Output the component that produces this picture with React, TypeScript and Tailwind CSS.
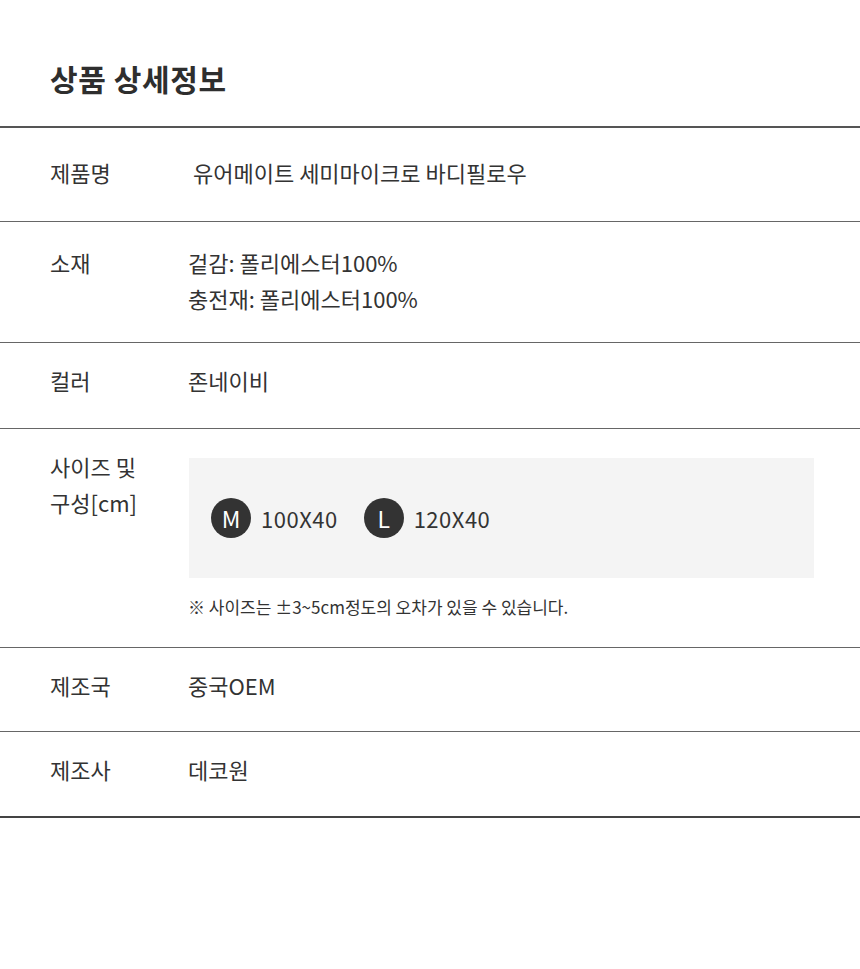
import React from "react";

const FONT = { fontFamily: '"Noto Sans CJK KR", "Noto Sans", sans-serif' };

interface RowProps {
  label: React.ReactNode;
  children: React.ReactNode;
  pad: string;
  last?: boolean;
}

const Row: React.FC<RowProps> = ({ label, children, pad, last }) => (
  <div className={`flex pl-[50px] ${last ? "" : "border-b border-[#666]"} ${pad}`}>
    <div className="w-[138px] shrink-0">{label}</div>
    <div className="flex-1 min-w-0">{children}</div>
  </div>
);

const SizeBadge: React.FC<{ letter: string; size: string }> = ({ letter, size }) => (
  <div className="flex items-center gap-[10px]">
    <span className="w-10 h-10 rounded-full bg-[#333] text-white flex items-center justify-center text-[23px] leading-none">
      {letter}
    </span>
    <span className="tracking-[0.5px]">{size}</span>
  </div>
);

export default function App() {
  return (
    <div className="min-h-screen bg-white text-[#333]" style={FONT}>
      {/* Header */}
      <h1 className="pt-[56px] pb-[25px] pl-[50px] text-[30px] leading-[45px] font-bold tracking-[0.6px] text-[#2e2e2e]">
        상품 상세정보
      </h1>

      <div className="border-t-2 border-b-2 border-t-[#555] border-b-[#444] text-[22px] leading-[36px]">
        <Row label="제품명" pad="pt-[26px] pb-[31px]">
          <span className="pl-[5px]">유어메이트 세미마이크로 바디필로우</span>
        </Row>
        <Row label="소재" pad="pt-[22px] pb-[26px]">
          <p>겉감: 폴리에스터100%</p>
          <p>충전재: 폴리에스터100%</p>
        </Row>
        <Row label="컬러" pad="pt-[19px] pb-[30px]">
          존네이비
        </Row>
        <Row
          label={
            <>
              <p>사이즈 및</p>
              <p>구성[cm]</p>
            </>
          }
          pad="pt-[19px] pb-[29px]"
        >
          <div className="pr-[46px] pt-[10px]">
            <div className="h-[120px] bg-[#f4f4f4] ml-px pl-[22px] flex items-center gap-[26px]">
              <SizeBadge letter="M" size="100X40" />
              <SizeBadge letter="L" size="120X40" />
            </div>
            <p className="mt-[18px] text-[17px] leading-[22px]">
              ※ 사이즈는 ±3~5cm정도의 오차가 있을 수 있습니다.
            </p>
          </div>
        </Row>
        <Row label="제조국" pad="pt-[19px] pb-[28px]">
          중국OEM
        </Row>
        <Row label="제조사" pad="pt-[19px] pb-[29px]" last>
          데코원
        </Row>
      </div>
    </div>
  );
}
